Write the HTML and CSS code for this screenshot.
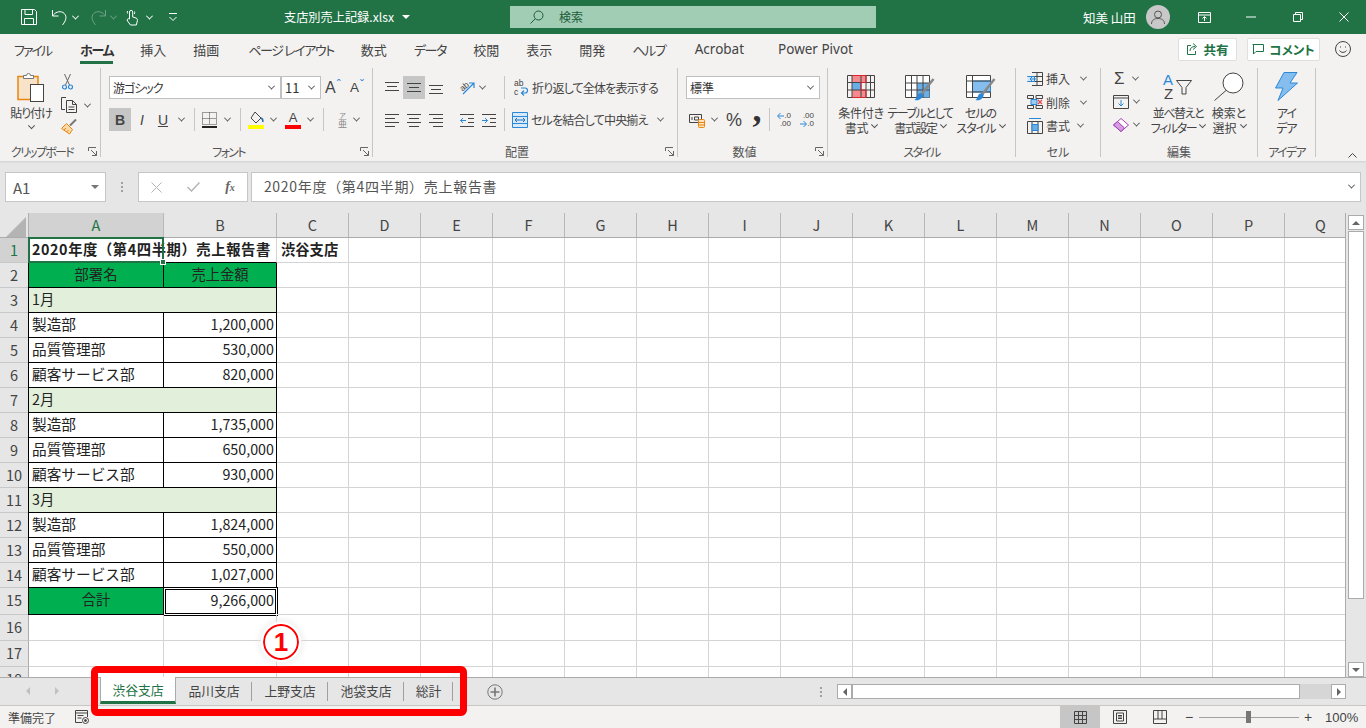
FILE: index.html
```html
<!DOCTYPE html>
<html lang="ja">
<head>
    <meta charset="UTF-8">
    <title>支店別売上記録.xlsx - Excel</title>
    <link rel="stylesheet" href="styles.css">
</head>
<body>
<div class="app">
    <header class="titlebar">
        <div class="qat">
            <svg class="w ml0" width="16" height="16" viewBox="0 0 16 16"><path d="M.5.5h13l2 2v13H.5z M4 .5v5h7.500v-5 M3.500 15.500v-6h9v6"/></svg>
            <svg class="w ml14" width="17" height="17" viewBox="0 0 17 17"><path d="M1.500 1v6h6 M1.500 7C4 3.500 8 1.500 12 3.500c4 2.500 4 7-.5 12.500"/></svg>
            <i class="chev white ml5"></i>
            <svg class="dim ml12" width="17" height="17" viewBox="0 0 17 17"><path d="M15.500 1v6h-6 M15.500 7C13 3.500 9 1.500 5 3.500 1 6 1 10.500 5.500 16"/></svg>
            <i class="chev faded ml4"></i>
            <svg class="w ml10" width="12" height="17" viewBox="0 0 12 17"><path d="M3.500 10V3a1.600 1.600 0 0 1 3.200 0v5l3.300 1c1.500.5 1.500 2 1.300 3l-1 4H4.500L1.500 12C.5 10.500 2 9 3.500 10z M1.500 4.500a4 4 0 0 1 0-2.500 M8.500 2.500a4 4 0 0 1 0 2.500"/></svg>
            <i class="chev white ml9"></i>
            <svg class="w ml17" width="8" height="8" viewBox="0 0 8 8"><path d="M0 .5h8 M.5 4L4 7.500 7.500 4"/></svg>
            <span class="doc-name">支店別売上記録.xlsx</span>
            <i class="caret ml8"></i>
        </div>
        <div class="search">
            <svg class="dark-ico" width="14" height="14" viewBox="0 0 14 14"><circle cx="8.500" cy="5.500" r="4.500"/><path d="M5.300 8.700L.5 13.500"/></svg>
            <span class="search-text">検索</span>
        </div>
        <div class="win">
            <span class="user">知美 山田</span>
            <span class="avatar"><svg class="gray-ico" width="14" height="14" viewBox="0 0 14 14"><circle cx="7" cy="4.500" r="3.500"/><path d="M.5 14c0-4 3-5.500 6.500-5.500s6.500 1.500 6.500 5.500"/></svg></span>
            <svg class="w ml28" width="13" height="11" viewBox="0 0 13 11"><path d="M.5.5h12v10H.5z M.5 3h12 M6.500 9V5 M4.500 6.500l2-2 2 2"/></svg>
            <svg class="w ml35" width="10" height="2" viewBox="0 0 10 2"><path d="M0 1h10"/></svg>
            <svg class="w ml37" width="10" height="10" viewBox="0 0 10 10"><path d="M.5 2.500h7v7h-7z M2.500 2.500v-2h7v7h-2"/></svg>
            <svg class="w ml36" width="10" height="10" viewBox="0 0 10 10"><path d="M.5.5l9 9 M9.500.5l-9 9"/></svg>
        </div>
    </header>

    <nav class="menu">
        <span class="kana file">ファイル</span>
        <span class="kana on">ホーム</span>
        <span>挿入</span>
        <span>描画</span>
        <span class="kana page">ページ レイアウト</span>
        <span>数式</span>
        <span class="kana">データ</span>
        <span>校閲</span>
        <span>表示</span>
        <span>開発</span>
        <span class="kana">ヘルプ</span>
        <span class="latin">Acrobat</span>
        <span class="latin pivot">Power Pivot</span>
        <div class="menu-right">
            <button class="pill share"><svg class="green-ico" width="12" height="12" viewBox="0 0 12 12"><path d="M5 2.500H1.500v9h8V8 M4 8c0-3 2-4.500 5-4.500 M7 .5l3.500 3L7 6.500"/></svg>共有</button>
            <button class="pill comment"><svg class="green-ico" width="12" height="12" viewBox="0 0 12 12"><path d="M.5 1.500h11v7H4L1.500 11V1.500"/></svg>コメント</button>
            <svg class="i smile" width="16" height="16" viewBox="0 0 16 16"><circle cx="8" cy="8" r="7.500"/><path d="M4.500 9.500c1.500 2.500 5.500 2.500 7 0 M5.500 5.500v1 M10.500 5.500v1"/></svg>
        </div>
    </nav>

    <section class="ribbon">
        <div class="group g-clip">
            <div class="body">
                <div class="big paste">
                    <svg class="paste-ico" width="28" height="30" viewBox="0 0 28 30"><rect x="1" y="4.500" width="20" height="23" fill="#f8e3c8" stroke="#e8860f" stroke-width="1.500"/><path d="M6.500 6.500v-3h3a2 2 0 0 1 4 0h3v3z" fill="#fff" stroke="#777"/><rect x="13.500" y="12.500" width="13" height="17" fill="#fff" stroke="#444"/></svg>
                    <span>貼り付け</span>
                    <i class="chev"></i>
                </div>
                <div class="clip-side">
                    <svg class="ml1" width="11" height="16" viewBox="0 0 11 16"><path d="M2.500 0l5 11 M8.500 0l-5 11" stroke="#666" fill="none"/><circle cx="2.500" cy="13" r="2" fill="none" stroke="#2b88d8" stroke-width="1.200"/><circle cx="8.500" cy="13" r="2" fill="none" stroke="#2b88d8" stroke-width="1.200"/></svg>
                    <div class="line">
                        <svg class="i" width="16" height="16" viewBox="0 0 16 16"><path d="M5 .5H.5v12H4 M5.500 3.500h6l4 4v8h-10z M11.500 3.500v4h4 M7.500 10h6 M7.500 12.500h6"/></svg>
                        <i class="chev ml8"></i>
                    </div>
                    <svg width="16" height="16" viewBox="0 0 16 16"><path d="M9 6.500l6-6" stroke="#777" stroke-width="2" fill="none"/><path d="M5.500 4.500l6 6-3 4.500-8-5.500z" fill="#fbd9a9" stroke="#e8860f"/><path d="M3 11l2-2 M5.500 13l2-2" stroke="#e8860f"/></svg>
                </div>
            </div>
            <div class="label launch kana">クリップボード<svg class="launcher" width="9" height="9" viewBox="0 0 9 9"><path d="M.5 4V.5H8 M8.500 8.500L3 3 M8.500 4v4.500H4"/></svg></div>
        </div>

        <div class="group g-font">
            <div class="body rows">
                <div class="line">
                    <div class="combo font-name kana">游ゴシック<i class="chev"></i></div>
                    <div class="combo font-size">11<i class="chev"></i></div>
                    <span class="grow up ml4">A<sup>ˆ</sup></span>
                    <span class="grow down ml6">A<sup>ˇ</sup></span>
                </div>
                <div class="line">
                    <span class="tb pressed bold">B</span>
                    <span class="tb italic">I</span>
                    <span class="tb under">U</span>
                    <i class="chev ml6"></i>
                    <b class="sep ml10"></b>
                    <svg class="ml7" width="15" height="16" viewBox="0 0 15 16"><path d="M.5.5h14v12H.5z M7.500.5v12 M.5 6.500h14" fill="none" stroke="#444" stroke-dasharray="1 1"/><path d="M0 15h15" stroke="#222" stroke-width="2"/></svg>
                    <i class="chev ml8"></i>
                    <b class="sep ml10"></b>
                    <svg class="ml7" width="16" height="18" viewBox="0 0 16 18"><path d="M7 1l6 6-5 5-5-5z" fill="none" stroke="#444"/><path d="M13 7c2 1 2 3 1.500 4" stroke="#2b6fb5" stroke-width="1.500" fill="none"/><rect y="14" width="16" height="4" fill="#ffff00"/></svg>
                    <i class="chev ml7"></i>
                    <span class="letter-a ml9">A</span>
                    <i class="chev ml7"></i>
                    <b class="sep ml10"></b>
                    <span class="furi ml11"><small>ア</small>亜</span>
                    <i class="chev ml4"></i>
                </div>
            </div>
            <div class="label launch kana">フォント<svg class="launcher" width="9" height="9" viewBox="0 0 9 9"><path d="M.5 4V.5H8 M8.500 8.500L3 3 M8.500 4v4.500H4"/></svg></div>
        </div>

        <div class="group g-align">
            <div class="body rows">
                <div class="line">
                    <svg class="i" width="14" height="14" viewBox="0 0 14 14"><path d="M0 1.500h14 M2 5.500h10 M0 9.500h14"/></svg>
                    <span class="tb pressed ml4"><svg class="i" width="14" height="14" viewBox="0 0 14 14"><path d="M0 2.500h14 M2 6.500h10 M0 10.500h14"/></svg></span>
                    <svg class="i ml4" width="14" height="14" viewBox="0 0 14 14"><path d="M0 4.500h14 M2 8.500h10 M0 12.500h14"/></svg>
                    <svg class="ml17 open" width="15" height="15" viewBox="0 0 15 15"><text x="0" y="9" class="mini" transform="rotate(-40 5 7)">ab</text><path d="M3 14L14 3 M9 3h5v5" stroke="#2b88d8" stroke-width="1.200" fill="none"/></svg>
                    <i class="chev ml5"></i>
                    <b class="sep ml19"></b>
                    <svg class="ml9 open" width="15" height="17" viewBox="0 0 15 17"><text x="0" y="7" class="mini">ab</text><text x="0" y="16" class="mini">c</text><path d="M8 14h3a2.500 2.500 0 0 0 0-5H7 M10 11.500L7.500 14l2.500 2.500" stroke="#2b88d8" stroke-width="1.200" fill="none"/></svg>
                    <span class="tool-text ml3">折り返して全体を表示する</span>
                </div>
                <div class="line">
                    <svg class="i" width="14" height="14" viewBox="0 0 14 14"><path d="M0 1.500h14 M0 5.500h10 M0 9.500h14 M0 13.500h10"/></svg>
                    <svg class="i ml8" width="14" height="14" viewBox="0 0 14 14"><path d="M0 1.500h14 M2 5.500h10 M0 9.500h14 M2 13.500h10"/></svg>
                    <svg class="i ml8" width="14" height="14" viewBox="0 0 14 14"><path d="M0 1.500h14 M4 5.500h10 M0 9.500h14 M4 13.500h10"/></svg>
                    <svg class="ml17" width="14" height="14" viewBox="0 0 14 14"><path d="M0 1.500h14 M8 5.500h6 M8 9.500h6 M0 13.500h14" stroke="#444" fill="none"/><path d="M6 7.500H.5 M3 5L.5 7.500 3 10" stroke="#2b88d8" fill="none"/></svg>
                    <svg class="ml8" width="14" height="14" viewBox="0 0 14 14"><path d="M0 1.500h14 M8 5.500h6 M8 9.500h6 M0 13.500h14" stroke="#444" fill="none"/><path d="M0 7.500h5.500 M3 5l2.500 2.500L3 10" stroke="#2b88d8" fill="none"/></svg>
                    <b class="sep ml8"></b>
                    <svg class="ml7" width="16" height="16" viewBox="0 0 16 16"><path d="M.5.5h15v15H.5z M.5 4.500h15 M.5 11.500h15" fill="#d6e9f8" stroke="#2b88d8"/><path d="M3 8h10 M5 6L3 8l2 2 M11 6l2 2-2 2" stroke="#2b6fb5" fill="none"/></svg>
                    <span class="tool-text ml3 merge-text">セルを結合して中央揃え</span>
                    <i class="chev ml10"></i>
                </div>
            </div>
            <div class="label launch">配置<svg class="launcher" width="9" height="9" viewBox="0 0 9 9"><path d="M.5 4V.5H8 M8.500 8.500L3 3 M8.500 4v4.500H4"/></svg></div>
        </div>

        <div class="group g-num">
            <div class="body rows">
                <div class="line">
                    <div class="combo num-format">標準<i class="chev"></i></div>
                </div>
                <div class="line">
                    <svg class="ml3" width="16" height="16" viewBox="0 0 16 16"><path d="M.5 2.500h12v8H.5z M3 5v3 M5.500 5h4v3h-4z" fill="none" stroke="#444"/><rect x="9.500" y="7.500" width="6" height="8" rx="1" fill="#fbe3c2" stroke="#e8860f"/><path d="M9.500 10.500h6 M9.500 13h6" stroke="#e8860f"/></svg>
                    <i class="chev ml7"></i>
                    <span class="percent ml9">%</span>
                    <span class="comma ml10">,</span>
                    <b class="sep ml7"></b>
                    <span class="dec ml7"><svg width="7" height="8" viewBox="0 0 7 8"><path d="M7 4H1 M3.500 1L.5 4l3 3" stroke="#2b88d8" fill="none"/></svg><em>.0</em><em class="two">.00</em></span>
                    <span class="dec ml9"><svg class="low" width="7" height="8" viewBox="0 0 7 8"><path d="M0 4h6 M3.500 1l3 3-3 3" stroke="#2b88d8" fill="none"/></svg><em>.00</em><em class="two">.0</em></span>
                </div>
            </div>
            <div class="label launch">数値<svg class="launcher" width="9" height="9" viewBox="0 0 9 9"><path d="M.5 4V.5H8 M8.500 8.500L3 3 M8.500 4v4.500H4"/></svg></div>
        </div>

        <div class="group g-style">
            <div class="body bigs">
                <div class="big cond">
                    <svg width="28" height="23" viewBox="0 0 28 23"><path d="M5 .5h14v7H5z M5 15h14v7.500H5z" fill="#f4898e"/><path d="M5 8h9v7H5z" fill="#6aaee6"/><path d="M.5.5h27v22H.5z M.5 7.500h27 M.5 15h27 M5 .5v22 M14 .5v22 M19 .5v22 M23.500 .5v22" fill="none" stroke="#444"/><path d="M5 .5h14v7H14v7.500h5v7.500H5" fill="none" stroke="#d9252b"/></svg>
                    <span>条件付き</span>
                    <span>書式<i class="chev ml4"></i></span>
                </div>
                <div class="big table">
                    <svg width="30" height="29" viewBox="0 0 30 29"><path d="M.5.5h24v22H.5z" fill="#fff" stroke="#444"/><path d="M12 8h12.500v14.500H12z" fill="#6aaee6"/><path d="M.5 8h24 M.5 15h24 M6.500.5v22 M12 .5v22 M18 .5v22" fill="none" stroke="#444"/><path d="M28.500 4L15 21" stroke="#888" stroke-width="2.500"/><path d="M13 19c4-2 6 1 3.500 4-2 2.500-5 2.500-7 2 2-1 2-4 3.500-6z" fill="#2b88d8"/></svg>
                    <span>テーブルとして</span>
                    <span>書式設定<i class="chev ml4"></i></span>
                </div>
                <div class="big cellst">
                    <svg width="30" height="29" viewBox="0 0 30 29"><path d="M.5.5h24v22H.5z" fill="#fff" stroke="#444"/><path d="M6.500 6h18v11h-18z" fill="#84bdee" stroke="#2b88d8"/><path d="M.5 6h24 M.5 17h24 M6.500.5v22" fill="none" stroke="#444"/><path d="M28.500 4L15 21" stroke="#888" stroke-width="2.500"/><path d="M13 19c4-2 6 1 3.500 4-2 2.500-5 2.500-7 2 2-1 2-4 3.500-6z" fill="#2b88d8"/></svg>
                    <span>セルの</span>
                    <span>スタイル<i class="chev ml4"></i></span>
                </div>
            </div>
            <div class="label kana">スタイル</div>
        </div>

        <div class="group g-cell">
            <div class="body tri">
                <div class="line">
                    <svg width="16" height="14" viewBox="0 0 16 14"><path d="M5 .5h10.500v13H5 M.5 .5v0 M.5 4.500h15 M.5 9.500h15 M10 .5v13" fill="none" stroke="#444"/><path d="M.5 4.500h7v5h-7" fill="#cfe6f8" stroke="#2b88d8"/><path d="M9 7H3 M5 5L3 7l2 2" stroke="#2b88d8" fill="none"/></svg>
                    <span class="tool-text plain ml3">挿入</span>
                    <i class="chev ml11"></i>
                </div>
                <div class="line">
                    <svg width="16" height="14" viewBox="0 0 16 14"><path d="M.5 .5h6v3h-6z M9 .5h6.500v3H9z M.5 10.500h6v3h-6z M9 10.500h6.500v3H9z" fill="none" stroke="#444"/><path d="M4 4.500h6v5H4z" fill="#9bcaf0" stroke="#2b88d8"/><path d="M11 5l4 4 M15 5l-4 4" stroke="#e8474c" stroke-width="1.300"/></svg>
                    <span class="tool-text plain ml3">削除</span>
                    <i class="chev ml11"></i>
                </div>
                <div class="line">
                    <svg width="16" height="16" viewBox="0 0 16 16"><path d="M.5 3.500h15v12H.5z M5 3.500v12 M11 3.500v12" fill="none" stroke="#444"/><path d="M5 6.500h6v6H5z" fill="#6aaee6" stroke="#2b88d8"/><path d="M2 .5h12" stroke="#2b88d8"/></svg>
                    <span class="tool-text plain ml3">書式</span>
                    <i class="chev ml8"></i>
                </div>
            </div>
            <div class="label">セル</div>
        </div>

        <div class="group g-edit">
            <div class="body bigs">
                <div class="edit-col">
                    <div class="line"><span class="sigma">Σ</span><i class="chev ml7"></i></div>
                    <div class="line"><svg width="16" height="14" viewBox="0 0 16 14"><path d="M.5.5h15v13H.5z M.5 3h15" fill="none" stroke="#444"/><path d="M8 5v6 M5.500 8.500L8 11l2.500-2.500" stroke="#2b88d8" fill="none"/></svg><i class="chev ml5"></i></div>
                    <div class="line"><svg width="16" height="14" viewBox="0 0 16 14"><path d="M8 .5L15.500 7 8 13.500.5 7z" fill="#fff" stroke="#a33fb5"/><path d="M4.500 3.500L11.500 10 8 13.500.5 7z" fill="#d49be0" stroke="#a33fb5"/></svg><i class="chev ml5"></i></div>
                </div>
                <div class="big sort">
                    <svg class="open" width="30" height="29" viewBox="0 0 30 29"><text x="0" y="13" class="az blue">A</text><text x="1" y="27" class="az">Z</text><path d="M13.500 8.500h15l-5.500 7v6.500h-4v-6.500z" fill="none" stroke="#444"/></svg>
                    <span>並べ替えと</span>
                    <span>フィルター<i class="chev ml4"></i></span>
                </div>
                <div class="big find">
                    <svg class="i" width="30" height="29" viewBox="0 0 30 29"><circle cx="19" cy="11" r="10" fill="#fff"/><path d="M12 18.500L.5 28.500"/></svg>
                    <span>検索と</span>
                    <span>選択<i class="chev ml4"></i></span>
                </div>
            </div>
            <div class="label">編集</div>
        </div>

        <div class="group g-idea">
            <div class="body bigs">
                <div class="big idea">
                    <svg width="23" height="29" viewBox="0 0 23 29"><path d="M9 .5h13L15 11h7.500L3 28.500 8 16H.5z" fill="#84bdee" stroke="#2b88d8"/></svg>
                    <span>アイ</span>
                    <span>デア</span>
                </div>
            </div>
            <div class="label kana">アイデア</div>
        </div>
        <svg class="collapse i" width="9" height="5" viewBox="0 0 9 5"><path d="M.5 4.500l4-4 4 4"/></svg>
    </section>

    <section class="formula">
        <div class="name-box">A1<i class="caret gray"></i></div>
        <span class="grip"></span>
        <div class="fx-box">
            <svg class="gray-stroke" width="11" height="11" viewBox="0 0 11 11"><path d="M.5.5l10 10 M10.500.5l-10 10"/></svg>
            <svg class="gray-stroke" width="13" height="10" viewBox="0 0 13 10"><path d="M.5 5l4 4L12.500.5" stroke-width="1.500"/></svg>
            <span class="fx"><i>f</i><small>x</small></span>
        </div>
        <div class="input">2020年度（第4四半期）売上報告書<i class="chev big-chev"></i></div>
    </section>

    <section class="sheet-wrap">
        <div class="sheet">
            <div class="cols">
                <div class="corner"><span></span></div>
                <div class="col col-a sel">A</div>
                <div class="col col-b">B</div>
                <div class="col">C</div><div class="col">D</div><div class="col">E</div><div class="col">F</div><div class="col">G</div><div class="col">H</div><div class="col">I</div><div class="col">J</div><div class="col">K</div><div class="col">L</div><div class="col">M</div><div class="col">N</div><div class="col">O</div><div class="col">P</div><div class="col">Q</div>
            </div>

            <div class="row"><div class="rh sel">1</div><div class="c a title-cell bb">2020年度（第4四半期）売上報告書<span class="cursor"><b></b></span></div><div class="c b-col bb"></div><div class="rest strong">渋谷支店</div></div>
            <div class="row"><div class="rh">2</div><div class="c a head">部署名</div><div class="c b-col head">売上金額</div><div class="rest"></div></div>
            <div class="row"><div class="rh">3</div><div class="c a month">1月</div><div class="rest"></div></div>
            <div class="row"><div class="rh">4</div><div class="c a line-c">製造部</div><div class="c b-col num">1,200,000</div><div class="rest"></div></div>
            <div class="row"><div class="rh">5</div><div class="c a line-c">品質管理部</div><div class="c b-col num">530,000</div><div class="rest"></div></div>
            <div class="row"><div class="rh">6</div><div class="c a line-c">顧客サービス部</div><div class="c b-col num">820,000</div><div class="rest"></div></div>
            <div class="row"><div class="rh">7</div><div class="c a month">2月</div><div class="rest"></div></div>
            <div class="row"><div class="rh">8</div><div class="c a line-c">製造部</div><div class="c b-col num">1,735,000</div><div class="rest"></div></div>
            <div class="row"><div class="rh">9</div><div class="c a line-c">品質管理部</div><div class="c b-col num">650,000</div><div class="rest"></div></div>
            <div class="row"><div class="rh">10</div><div class="c a line-c">顧客サービス部</div><div class="c b-col num">930,000</div><div class="rest"></div></div>
            <div class="row"><div class="rh">11</div><div class="c a month">3月</div><div class="rest"></div></div>
            <div class="row"><div class="rh">12</div><div class="c a line-c">製造部</div><div class="c b-col num">1,824,000</div><div class="rest"></div></div>
            <div class="row"><div class="rh">13</div><div class="c a line-c">品質管理部</div><div class="c b-col num">550,000</div><div class="rest"></div></div>
            <div class="row"><div class="rh">14</div><div class="c a line-c">顧客サービス部</div><div class="c b-col num">1,027,000</div><div class="rest"></div></div>
            <div class="row tall"><div class="rh">15</div><div class="c a head">合計</div><div class="c b-col num total">9,266,000</div><div class="rest"></div></div>
            <div class="row mid"><div class="rh">16</div><div class="c a"></div><div class="c b-col"></div><div class="rest"></div></div>
            <div class="row mid"><div class="rh">17</div><div class="c a"></div><div class="c b-col"></div><div class="rest"></div></div>
            <div class="row"><div class="rh">18</div><div class="c a"></div><div class="c b-col"></div><div class="rest"></div></div>
        </div>
        <div class="vscroll">
            <span class="sb-btn"><i class="tri-up"></i></span>
            <span class="sb-thumb"></span>
            <span class="sb-btn end"><i class="tri-down"></i></span>
        </div>
    </section>

    <section class="tabbar">
        <div class="tab-nav"><i class="tri-left pale"></i><i class="tri-right pale"></i></div>
        <div class="tab active">渋谷支店</div>
        <div class="tab">品川支店</div>
        <div class="tab">上野支店</div>
        <div class="tab">池袋支店</div>
        <div class="tab short">総計</div>
        <svg class="add-sheet" width="16" height="16" viewBox="0 0 16 16"><circle cx="8" cy="8" r="7.200"/><path d="M8 3.500v9 M3.500 8h9" stroke-width="1.600"/></svg>
        <span class="grip hgrip"></span>
        <div class="hscroll">
            <span class="hs-btn"><i class="tri-left"></i></span>
            <span class="hs-thumb"></span>
            <span class="hs-btn end"><i class="tri-right"></i></span>
        </div>
    </section>

    <footer class="status">
        <span class="ready">準備完了</span>
        <svg class="i macro" width="14" height="14" viewBox="0 0 14 14"><path d="M7 12.500H.5V.5h12V7 M.5 3h12 M2.500 5.500h6 M2.500 8h4"/><circle cx="10.500" cy="10.500" r="3"/><circle cx="10.500" cy="10.500" r="1" fill="#444"/></svg>
        <div class="views">
            <span class="view pressed-view"><svg class="i" width="13" height="13" viewBox="0 0 13 13"><path d="M.5.5h12v12H.5z M4.500.5v12 M8.500.5v12 M.5 4.500h12 M.5 8.500h12"/></svg></span>
            <span class="view"><svg class="i" width="14" height="14" viewBox="0 0 14 14"><path d="M.5.5h13v13H.5z M3.500 3h7v8h-7z M5 5.500h4 M5 7h4 M5 8.500h4"/></svg></span>
            <span class="view"><svg class="i" width="14" height="14" viewBox="0 0 14 14"><path d="M.5.5h13v13H.5z M.5 9h13 M5 .5V9 M9 .5V9"/></svg></span>
        </div>
        <div class="zoom">
            <span class="zm">−</span>
            <span class="slider"><b></b></span>
            <span class="zm">+</span>
            <span class="pct">100%</span>
        </div>
    </footer>

    <div class="callout-box"></div>
    <div class="callout-num">1</div>
</div>
</body>
</html>
```

FILE: styles.css
```css
* {
    box-sizing: border-box;
}

html, body {
    margin: 0;
    height: 100%;
    overflow: hidden;
}

body {
    font-family: "Noto Sans CJK JP", "Noto Sans", sans-serif;
    color: #444;
    background-color: #f3f2f1;
}

svg {
    display: block;
    flex: none;
}

svg.open {
    overflow: visible;
}

i, em {
    font-style: normal;
}

.app {
    position: relative;
    width: 1366px;
    height: 728px;
    display: flex;
    flex-direction: column;
    overflow: hidden;
}

/* spacing used all over the ribbon */
.ml0 { margin-left: 0; }
.ml1 { margin-left: 1px; }
.ml3 { margin-left: 3px; }
.ml4 { margin-left: 4px; }
.ml5 { margin-left: 5px; }
.ml6 { margin-left: 6px; }
.ml7 { margin-left: 7px; }
.ml8 { margin-left: 8px; }
.ml9 { margin-left: 9px; }
.ml10 { margin-left: 10px; }
.ml11 { margin-left: 11px; }
.ml12 { margin-left: 12px; }
.ml14 { margin-left: 14px; }
.ml17 { margin-left: 17px; }
.ml19 { margin-left: 19px; }
.ml28 { margin-left: 28px; }
.ml35 { margin-left: 35px; }
.ml36 { margin-left: 36px; }
.ml37 { margin-left: 37px; }

/* icon strokes */
.i { fill: none; stroke: #444; }
.w { fill: none; stroke: #fff; }
.dim { fill: none; stroke: #6f9f85; }
.dark-ico { fill: none; stroke: #1e5c3a; }
.gray-ico { fill: none; stroke: #555; }
.green-ico { fill: none; stroke: #217346; }
.gray-stroke { fill: none; stroke: #b5b5b5; }

.chev {
    display: block;
    flex: none;
    width: 5px;
    height: 5px;
    border-right: 1px solid #555;
    border-bottom: 1px solid #555;
    transform: rotate(45deg) translate(-1px, -1px);
}

.chev.white { border-color: #fff; }
.chev.faded { border-color: #6f9f85; }

.caret {
    display: block;
    flex: none;
    width: 0;
    height: 0;
    border-left: 4px solid transparent;
    border-right: 4px solid transparent;
    border-top: 4px solid #fff;
}

.caret.gray { border-top-color: #777; }

/* title bar */
.titlebar {
    flex: none;
    height: 34px;
    display: flex;
    align-items: center;
    background-color: #217346;
    color: #fff;
}

.qat {
    width: 510px;
    padding-left: 21px;
    display: flex;
    align-items: center;
}

.doc-name {
    margin-left: 107px;
    font-size: 12.200px;
    font-feature-settings: "palt";
}

.search {
    width: 366px;
    height: 22px;
    padding-left: 20px;
    display: flex;
    align-items: center;
    background-color: #a0cdb4;
    color: #1e5c3a;
    font-size: 12px;
}

.search-text {
    margin-left: 15px;
    margin-top: -2px;
}

.win {
    flex: 1;
    display: flex;
    align-items: center;
    padding-left: 207px;
}

.user {
    font-size: 12.500px;
    width: 52px;
    white-space: nowrap;
}

.avatar {
    width: 24px;
    height: 24px;
    margin-left: 11px;
    border-radius: 50%;
    background-color: #c8c8c8;
    display: flex;
    align-items: center;
    justify-content: center;
}

/* menu */
.menu {
    flex: none;
    height: 30px;
    display: flex;
    align-items: center;
    gap: 27px;
    padding-left: 14px;
    font-size: 13px;
    font-feature-settings: "palt";
    white-space: nowrap;
}

.menu .kana {
    letter-spacing: -1.300px;
}

.menu .file {
    letter-spacing: -2px;
    margin-right: 2px;
}

.menu .page {
    letter-spacing: -1.400px;
    margin-left: 2px;
}

.menu .latin {
    font-family: "Noto Sans", sans-serif;
    font-size: 13.500px;
    margin-left: 2px;
}

.menu .pivot {
    margin-left: 7px;
}

.menu span.on {
    position: relative;
    font-weight: 700;
    color: #333;
}

.menu span.on::after {
    content: "";
    position: absolute;
    left: 0;
    right: 0;
    bottom: -5px;
    height: 3px;
    background-color: #217346;
}

.menu-right {
    margin-left: auto;
    display: flex;
    align-items: center;
    padding-right: 15px;
}

.pill {
    height: 23px;
    display: flex;
    align-items: center;
    justify-content: center;
    gap: 5px;
    padding: 0;
    border: 1px solid #e1dfdd;
    border-radius: 2px;
    background-color: #fff;
    color: #217346;
    font-family: inherit;
    font-weight: 700;
    font-size: 12.500px;
    font-feature-settings: "palt";
}

.share { width: 59px; }
.comment { width: 73px; margin-left: 10px; }
.smile { margin-left: 15px; }

/* ribbon */
.ribbon {
    position: relative;
    flex: none;
    height: 97px;
    display: flex;
    padding-top: 4px;
    font-size: 12px;
    font-feature-settings: "palt";
    white-space: nowrap;
}

.group {
    flex: none;
    height: 89px;
    display: flex;
    flex-direction: column;
    border-right: 1px solid #c8c6c4;
}

.g-clip { width: 101px; }
.g-font { width: 272px; }
.g-align { width: 305px; }
.g-num { width: 150px; }
.g-style { width: 188px; }
.g-cell { width: 85px; }
.g-edit { width: 157px; }
.g-idea { width: 58px; }

.body {
    flex: 1;
    display: flex;
}

.rows {
    flex-direction: column;
    gap: 9px;
    padding-top: 8px;
}

.bigs {
    padding-top: 4px;
}

.tri {
    flex-direction: column;
    margin-top: -1px;
}

.tri .line {
    height: 23.500px;
    padding-left: 11px;
}

.g-font .rows { padding-left: 8px; }
.g-align .rows { padding-left: 12px; }
.g-num .rows { padding-left: 8px; }
.g-style .bigs { padding-left: 10px; }
.g-edit .bigs { padding-left: 12px; }

.line {
    height: 23px;
    display: flex;
    align-items: center;
}

.label {
    position: relative;
    flex: none;
    height: 14px;
    margin-bottom: -2px;
    line-height: 14px;
    text-align: center;
    color: #555;
}

.label.kana {
    letter-spacing: -1.700px;
}

.label.launch {
    padding-right: 16px;
}

.launcher {
    position: absolute;
    right: 3px;
    top: 2px;
    fill: none;
    stroke: #666;
}

.big {
    flex: none;
    display: flex;
    flex-direction: column;
    align-items: center;
    line-height: 14.500px;
    letter-spacing: -1px;
}

.big svg {
    height: 34px;
    padding-bottom: 5px;
}

.big span {
    display: flex;
    align-items: center;
}

.g-style .big svg {
    height: 31px;
    margin-top: 3px;
    padding: 0 0 2px;
}

.g-style .cond svg {
    padding-bottom: 8px;
}

.cond { width: 46px; letter-spacing: -.200px; }
.table { width: 66px; margin-left: 3px; letter-spacing: -1.400px; }
.cellst { width: 47px; margin-left: 4px; }
.sort { width: 56px; letter-spacing: -1.400px; }
.find { width: 38px; margin-left: 4px; letter-spacing: 0; }
.idea { width: 57px; }

.big .chev {
    transform: rotate(45deg) translate(-2px, -2px);
}

.g-clip .body { padding-top: 4px; }

.paste {
    width: 42px;
    margin-left: 10px;
}

.big .paste-ico {
    height: 34px;
    padding: 0 0 4px;
}

.paste .chev {
    margin-top: 5px;
}

.clip-side {
    margin-left: 6px;
    padding: 2px 0 0 3px;
    display: flex;
    flex-direction: column;
    gap: 5px;
}

.clip-side .line {
    height: 18px;
    margin-top: 1px;
}

.combo {
    position: relative;
    flex: none;
    height: 23px;
    display: flex;
    align-items: center;
    padding-left: 3px;
    background-color: #fff;
    border: 1px solid #c0c0c0;
    color: #333;
}

.combo.kana {
    letter-spacing: -1px;
}

.combo .chev {
    position: absolute;
    right: 6px;
    top: 8px;
}

.font-name { width: 172px; }
.font-size { width: 40px; font-size: 13px; }
.num-format { width: 134px; }

.grow {
    flex: none;
    display: flex;
    font-family: "Liberation Sans", sans-serif;
    line-height: 20px;
}

.grow sup {
    font-size: 12px;
    line-height: 14px;
    color: #2b88d8;
    margin-left: 1px;
    vertical-align: top;
}

.up { font-size: 16px; width: 19px; }
.down { font-size: 13.500px; width: 15px; }

.tb {
    flex: none;
    width: 22px;
    height: 23px;
    display: flex;
    align-items: center;
    justify-content: center;
    font-family: "Liberation Sans", sans-serif;
    font-size: 14px;
}

.pressed { background-color: #c6c6c6; }
.bold { font-weight: 700; }
.italic { font-style: italic; }
.under { text-decoration: underline; width: 20px; }

.sep {
    display: block;
    flex: none;
    width: 1px;
    height: 23px;
    background-color: #c8c6c4;
}

.letter-a {
    flex: none;
    width: 16px;
    height: 18px;
    font-family: "Liberation Sans", sans-serif;
    font-size: 13px;
    line-height: 13px;
    text-align: center;
    border-bottom: 4px solid #ff0000;
}

.furi {
    flex: none;
    width: 15px;
    display: flex;
    flex-direction: column;
    align-items: center;
    font-size: 9px;
    line-height: 10px;
    color: #888;
}

.furi small { font-size: 7px; line-height: 8px; }

.mini {
    font-family: "Liberation Sans", sans-serif;
    font-size: 8.500px;
    fill: #444;
}

.tool-text {
    flex: none;
    color: #444;
    letter-spacing: -.800px;
}

.tool-text.plain {
    letter-spacing: 0;
}

.percent {
    flex: none;
    width: 16px;
    font-family: "Liberation Sans", sans-serif;
    font-size: 18px;
    line-height: 20px;
    text-align: center;
}

.comma {
    flex: none;
    width: 10px;
    height: 22px;
    font-family: "Liberation Serif", serif;
    font-size: 36px;
    font-weight: 700;
    line-height: 1px;
    text-align: center;
    color: #333;
}

.dec {
    position: relative;
    flex: none;
    width: 14px;
    height: 16px;
    font-family: "Liberation Sans", sans-serif;
    font-size: 8px;
    line-height: 8px;
}

.dec svg {
    position: absolute;
    left: 0;
    top: 0;
}

.dec svg.low { top: 8px; }

.dec em {
    display: block;
    text-align: right;
}

.sigma {
    flex: none;
    width: 12px;
    font-family: "Liberation Sans", sans-serif;
    font-size: 17px;
}

.edit-col {
    width: 37px;
    margin-top: -5px;
}

.edit-col .line:first-child { padding-left: 1px; }

.az {
    font-family: "Liberation Sans", sans-serif;
    font-size: 15px;
    fill: #444;
}

.az.blue { fill: #2b88d8; }

.collapse {
    position: absolute;
    right: 9px;
    top: 89px;
}

/* formula bar */
.formula {
    flex: none;
    height: 52px;
    display: flex;
    align-items: flex-start;
    padding: 11px 5px 0;
    background-color: #e6e6e6;
    box-shadow: inset 0 3px 2px -2px #d0d0d0;
}

.name-box, .fx-box, .input {
    height: 30px;
    display: flex;
    align-items: center;
    background-color: #fff;
    border: 1px solid #c6c6c6;
}

.name-box {
    width: 101px;
    padding: 0 6px 0 7px;
    justify-content: space-between;
    font-size: 15px;
    color: #555;
}

.grip {
    width: 2px;
    height: 10px;
    margin: 10px 15px 0 15px;
    background-image: repeating-linear-gradient(180deg, #a0a0a0 0 2px, transparent 2px 4px);
}

.fx-box {
    width: 110px;
    padding: 0 12px;
    justify-content: space-between;
}

.fx {
    font-family: "Liberation Serif", serif;
    font-style: italic;
    font-weight: 700;
    font-size: 14px;
    color: #666;
}

.fx i { font-style: italic; }
.fx small { font-size: 10px; }

.input {
    position: relative;
    width: 1111px;
    margin-left: 3px;
    padding: 0 0 2px 12px;
    font-size: 14px;
    letter-spacing: .700px;
    color: #555;
}

.big-chev {
    position: absolute;
    right: 6px;
    top: 11px;
}

/* sheet */
.sheet-wrap {
    flex: none;
    height: 465px;
    display: flex;
    background-color: #e6e6e6;
    border-bottom: 1px solid #ababab;
}

.sheet {
    width: 1346px;
    overflow: hidden;
    background-color: #fff;
    border-right: 1px solid #ababab;
}

.cols {
    height: 25px;
    display: flex;
    background-color: #e6e6e6;
    border-bottom: 1px solid #ababab;
}

.corner {
    width: 29px;
    padding: 4px 3px 0 6px;
    border-right: 1px solid #b0b0b0;
}

.corner span {
    display: block;
    width: 20px;
    height: 20px;
    background-color: #b4b4b4;
    clip-path: polygon(100% 0, 100% 100%, 0 100%);
}

.col {
    flex: none;
    width: 72px;
    font-size: 14.500px;
    line-height: 23px;
    text-align: center;
    color: #444;
    border-right: 1px solid #b8b8b8;
}

.col-a { width: 135px; }
.col-b { width: 113px; }

.sel {
    background-color: #d2d2d2;
    color: #217346;
}

.row {
    height: 25px;
    display: flex;
    font-size: 14.300px;
    color: #222;
}

.row.tall { height: 27px; }
.row.mid { height: 26px; }

.rh {
    flex: none;
    width: 29px;
    line-height: 23px;
    text-align: center;
    font-size: 14.500px;
    color: #444;
    background-color: #e6e6e6;
    border-right: 1px solid #ababab;
    border-bottom: 1px solid #c8c8c8;
}

.rh.sel {
    background-color: #d2d2d2;
    color: #217346;
}

.c {
    flex: none;
    line-height: 22px;
    white-space: nowrap;
    border-right: 1px solid #d4d4d4;
    border-bottom: 1px solid #d4d4d4;
}

.a { width: 135px; padding-left: 3px; }
.b-col { width: 113px; }

.a.head, .a.month, .a.line-c {
    box-shadow: -1px 0 0 #000;
}

.rest {
    flex: 1;
    line-height: 22px;
    padding-left: 4px;
    background-image: repeating-linear-gradient(90deg, transparent 0 71px, #d4d4d4 71px 72px);
    border-bottom: 1px solid #d4d4d4;
}

.strong {
    font-weight: 700;
}

.title-cell {
    position: relative;
    font-weight: 700;
    letter-spacing: .600px;
}

.bb {
    border-bottom-color: #000;
}

.head {
    background-color: #00b050;
    text-align: center;
    border-right-color: #000;
    border-bottom-color: #000;
    padding-left: 0;
}

.month {
    width: 248px;
    background-color: #e2efda;
    border-right-color: #000;
    border-bottom-color: #000;
}

.line-c {
    font-size: 14.670px;
    border-right-color: #000;
    border-bottom-color: #000;
}

.num {
    text-align: right;
    padding-right: 2px;
    border-right-color: #000;
    border-bottom-color: #000;
    color: #222;
}

.total {
    line-height: 24px;
    border-right-color: transparent;
    border-bottom-color: transparent;
    outline: 3px double #000;
    outline-offset: -2px;
}

/* green box around A1 */
.cursor {
    position: absolute;
    left: -1px;
    top: -1px;
    width: 136px;
    height: 26px;
    border: 2px solid #217346;
}

.cursor b {
    position: absolute;
    right: -4px;
    bottom: -4px;
    width: 6px;
    height: 6px;
    background-color: #217346;
    border: 1px solid #fff;
}

/* scrollbars */
.vscroll {
    flex: 1;
    display: flex;
    flex-direction: column;
    padding: 2px 2px 0 2px;
}

.sb-btn {
    flex: none;
    height: 15px;
    display: flex;
    align-items: center;
    justify-content: center;
    background-color: #fff;
    border: 1px solid #ababab;
}

.sb-btn.end {
    margin-top: auto;
}

.sb-thumb {
    height: 368px;
    margin-top: 1px;
    background-color: #fff;
    border: 1px solid #ababab;
}

.tri-up, .tri-down, .tri-left, .tri-right {
    display: block;
    flex: none;
    width: 0;
    height: 0;
    border: 4px solid transparent;
}

.tri-up { border-bottom-color: #666; border-top-width: 0; }
.tri-down { border-top-color: #666; border-bottom-width: 0; }
.tri-left { border-right-color: #666; border-left-width: 0; }
.tri-right { border-left-color: #666; border-right-width: 0; }
.tri-left.pale { border-right-color: #c0c0c0; }
.tri-right.pale { border-left-color: #c0c0c0; }

/* sheet tabs */
.tabbar {
    flex: none;
    height: 27px;
    display: flex;
    background-color: #e6e6e6;
    font-size: 12.800px;
    white-space: nowrap;
}

.tab-nav {
    width: 100px;
    padding: 9px 0 0 26px;
    display: flex;
    gap: 25px;
}

.tab {
    position: relative;
    flex: none;
    width: 76px;
    height: 25px;
    line-height: 25px;
    text-align: center;
    color: #444;
}

.tab::after {
    content: "";
    position: absolute;
    right: 0;
    top: 4px;
    bottom: 2px;
    width: 1px;
    background-color: #a0a0a0;
}

.tab.active {
    margin-top: -1px;
    height: 27px;
    color: #217346;
    background-color: #fff;
    border-left: 1px solid #ababab;
    border-right: 1px solid #ababab;
    border-bottom: 3px solid #217346;
}

.tab.active::after {
    display: none;
}

.tab.short {
    width: 49px;
}

.add-sheet {
    margin: 6px 0 0 34px;
    fill: none;
    stroke: #777;
}

.hgrip {
    margin: 9px 15px 0 317px;
}

.hscroll {
    width: 509px;
    height: 15px;
    margin-top: 6px;
    display: flex;
    background-color: #d6d6d6;
}

.hs-btn {
    flex: none;
    width: 15px;
    display: flex;
    align-items: center;
    justify-content: center;
    background-color: #fff;
    border: 1px solid #ababab;
}

.hs-btn.end {
    margin-left: auto;
}

.hs-thumb {
    width: 448px;
    background-color: #fff;
    border: 1px solid #ababab;
}

/* status bar */
.status {
    flex: 1;
    display: flex;
    align-items: center;
    font-size: 12px;
    white-space: nowrap;
    background-color: #f3f2f1;
    border-top: 1px solid #c8c6c4;
}

.ready {
    flex: none;
    width: 48px;
    margin-left: 8px;
}

.macro {
    margin-left: 19px;
}

.views {
    flex: none;
    margin-left: 971px;
    display: flex;
    align-self: stretch;
}

.view {
    width: 40px;
    display: flex;
    align-items: center;
    justify-content: center;
}

.pressed-view {
    background-color: #c6c6c6;
}

.zoom {
    flex: none;
    display: flex;
    align-items: center;
    margin-left: 2px;
}

.zm {
    width: 14px;
    text-align: center;
    font-size: 14px;
    font-family: "Liberation Sans", sans-serif;
}

.slider {
    position: relative;
    width: 100px;
    height: 1px;
    margin: 0 2px 0 3px;
    background-color: #a0a0a0;
}

.slider b {
    position: absolute;
    left: 47px;
    top: -6px;
    width: 5px;
    height: 12px;
    background-color: #777;
}

.pct {
    margin-left: 10px;
    font-family: "Liberation Sans", sans-serif;
    font-size: 13px;
}

/* red annotation drawn over the screenshot */
.callout-box {
    position: absolute;
    left: 91px;
    top: 666px;
    width: 376px;
    height: 50px;
    border: 7px solid #ff0000;
    border-radius: 6px;
}

.callout-num {
    position: absolute;
    left: 263px;
    top: 624px;
    width: 36px;
    height: 36px;
    border: 2px solid #ff0000;
    outline: 2px solid #fff;
    border-radius: 50%;
    background-color: #fff;
    box-shadow: 0 0 5px 3px rgba(255, 255, 255, 0.8), 0 0 6px 3px rgba(0, 0, 0, 0.12);
    color: #ff0000;
    font-family: "Liberation Sans", sans-serif;
    font-weight: 700;
    font-size: 26px;
    line-height: 32px;
    text-align: center;
}
```
